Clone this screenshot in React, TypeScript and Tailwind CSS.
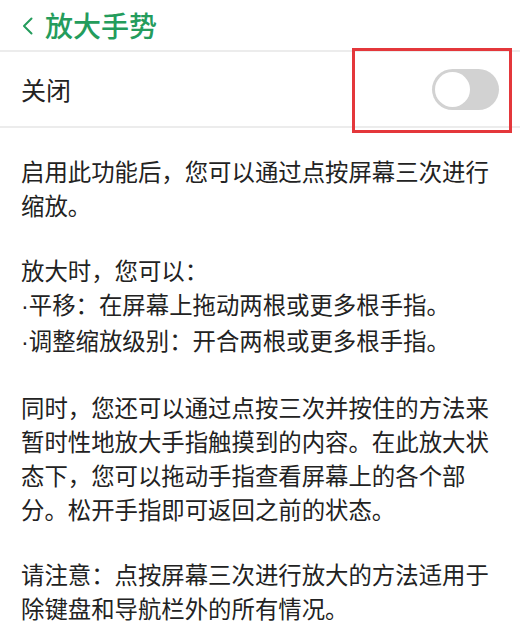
import React from 'react';

const paragraphs: string[][] = [
  ['启用此功能后，您可以通过点按屏幕三次进行', '缩放。'],
  ['放大时，您可以：', '·平移：在屏幕上拖动两根或更多根手指。', '·调整缩放级别：开合两根或更多根手指。'],
  [
    '同时，您还可以通过点按三次并按住的方法来',
    '暂时性地放大手指触摸到的内容。在此放大状',
    '态下，您可以拖动手指查看屏幕上的各个部',
    '分。松开手指即可返回之前的状态。',
  ],
  ['请注意：点按屏幕三次进行放大的方法适用于', '除键盘和导航栏外的所有情况。'],
];

function Line({ text }: { text: string }) {
  if (text.startsWith('·')) {
    return (
      <span className="block">
        <span style={{ fontFamily: '"Liberation Sans", sans-serif' }}>·</span>
        {text.slice(1)}
      </span>
    );
  }
  return <span className="block">{text}</span>;
}

function Toggle() {
  return (
    <div className="w-[67px] h-[41px] rounded-full bg-[#d2d2d2] p-[3px] flex items-center">
      <div className="w-[35px] h-[35px] rounded-full bg-white" />
    </div>
  );
}

export default function App() {
  return (
    <div
      className="relative w-[520px] h-[630px] bg-white overflow-hidden text-[#222]"
      style={{ fontFamily: '"Noto Sans CJK SC", "Noto Sans", sans-serif' }}
    >
      <header className="h-[52px] flex items-center pl-[22px] gap-[12px] border-b-2 border-[#ececec]">
        <svg width="11" height="18" viewBox="0 0 11 18" className="mt-[2px]">
          <polyline points="9.5,1.5 2,9 9.5,16.5" fill="none" stroke="#249c5c" strokeWidth="2" strokeLinecap="round" strokeLinejoin="round" />
        </svg>
        <h1 className="text-[28px] font-medium text-[#249c5c] leading-none">放大手势</h1>
      </header>

      <div className="h-[76px] flex items-center justify-between pl-[21px] pr-[21px] border-b-2 border-[#ececec]">
        <span className="text-[25px] leading-none">关闭</span>
        <Toggle />
      </div>

      <div className="pt-[26px] px-[21px] flex flex-col gap-[31px] text-[23.4px] leading-[34px]">
        {paragraphs.map((lines, i) => (
          <p key={i} className="whitespace-nowrap">
            {lines.map((l, j) => (
              <Line key={j} text={l} />
            ))}
          </p>
        ))}
      </div>

      <div className="absolute left-[352px] top-[48px] w-[160px] h-[85px] border-[3px] border-[#e4373b]" />
    </div>
  );
}
